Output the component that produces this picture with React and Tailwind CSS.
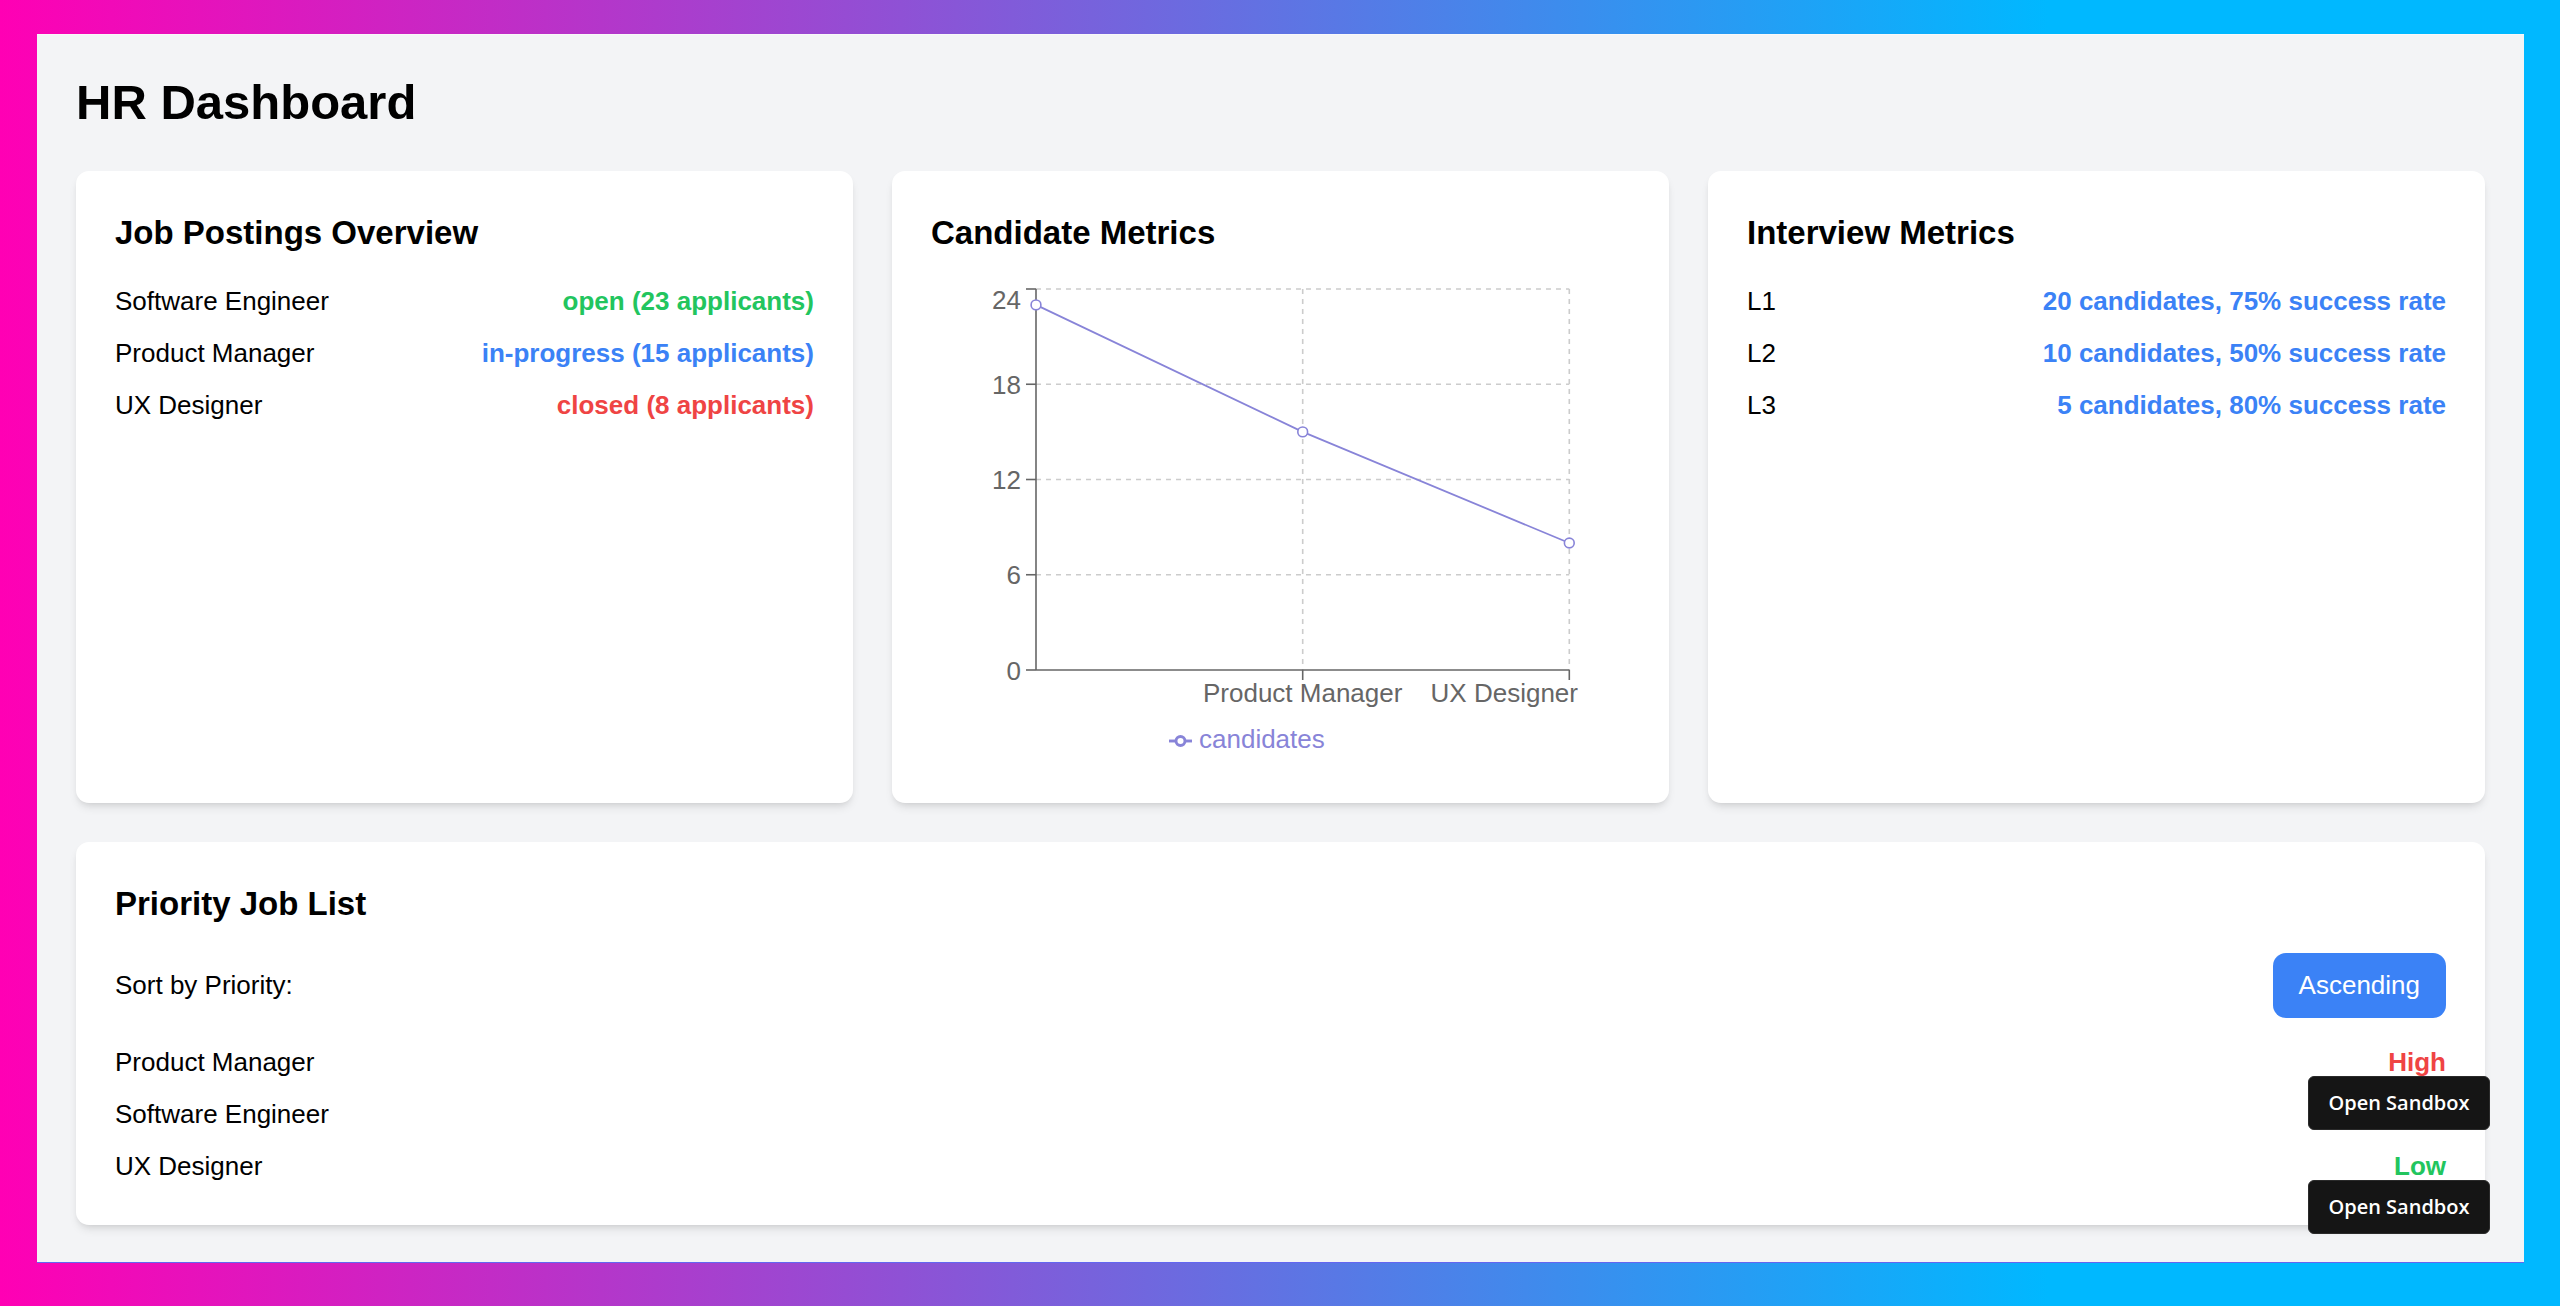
import React, { useState } from 'react';

const postings = [
  { title: 'Software Engineer', status: 'open', applicants: 23 },
  { title: 'Product Manager', status: 'in-progress', applicants: 15 },
  { title: 'UX Designer', status: 'closed', applicants: 8 }
];

const statusColor = {
  open: 'text-[#22c55e]',
  'in-progress': 'text-[#3b82f6]',
  closed: 'text-[#ef4444]'
};

const interviews = [
  { level: 'L1', candidates: 20, rate: 75 },
  { level: 'L2', candidates: 10, rate: 50 },
  { level: 'L3', candidates: 5, rate: 80 }
];

const priorityJobs = [
  { title: 'Software Engineer', priority: 'Medium' },
  { title: 'Product Manager', priority: 'High' },
  { title: 'UX Designer', priority: 'Low' }
];

const rank = { High: 0, Medium: 1, Low: 2 };

const priorityColor = {
  High: 'text-[#ef4444]',
  Medium: 'text-[#eab308]',
  Low: 'text-[#22c55e]'
};

const PLOT = { left: 105, right: 638.3, top: 7, bottom: 388, max: 24 };
const yOf = (v) => PLOT.bottom - (v / PLOT.max) * (PLOT.bottom - PLOT.top);
const xs = [105, 371.7, 638.3];
const series = [23, 15, 8];

function CandidateChart() {
  const ticks = [0, 6, 12, 18, 24];
  const pts = series.map((v, i) => [xs[i], yOf(v)]);
  return (
    <svg width={699} height={482} className="block" fontFamily="'Liberation Sans', Arial, sans-serif">
      {/* grid */}
      {ticks.slice(1).map((t) =>
        <line key={t} x1={PLOT.left} x2={PLOT.right} y1={yOf(t)} y2={yOf(t)} stroke="#ccc" strokeWidth={1.6} strokeDasharray="5 5" />
      )}
      {xs.slice(1).map((x) =>
        <line key={x} x1={x} x2={x} y1={PLOT.top} y2={PLOT.bottom} stroke="#ccc" strokeWidth={1.6} strokeDasharray="5 5" />
      )}

      {/* y axis */}
      <line x1={PLOT.left} x2={PLOT.left} y1={PLOT.top} y2={PLOT.bottom} stroke="#666" strokeWidth={1.6} />
      {ticks.map((t) =>
        <g key={t}>
          <line x1={95} x2={PLOT.left} y1={yOf(t)} y2={yOf(t)} stroke="#666" strokeWidth={1.6} />
          <text x={90} y={t === 24 ? 27 : yOf(t) + 9.5} textAnchor="end" fontSize={26} fill="#666">{t}</text>
        </g>
      )}

      {/* x axis */}
      <line x1={PLOT.left} x2={PLOT.right} y1={PLOT.bottom} y2={PLOT.bottom} stroke="#666" strokeWidth={1.6} />
      {xs.slice(1).map((x) =>
        <line key={x} x1={x} x2={x} y1={PLOT.bottom} y2={PLOT.bottom + 10} stroke="#666" strokeWidth={1.6} />
      )}
      <text x={371.7} y={420} textAnchor="middle" fontSize={26} fill="#666">Product Manager</text>
      <text x={647} y={420} textAnchor="end" fontSize={26} fill="#666">UX Designer</text>

      {/* series */}
      <polyline points={pts.map((p) => p.join(',')).join(' ')} fill="none" stroke="#8884d8" strokeWidth={1.8} />
      {pts.map(([x, y]) =>
        <circle key={x} cx={x} cy={y} r={4.9} fill="#fff" stroke="#8884d8" strokeWidth={1.6} />
      )}

      {/* legend */}
      <g stroke="#8884d8" strokeWidth={2.9} fill="none">
        <line x1={238} x2={245} y1={459} y2={459} />
        <circle cx={249.5} cy={459} r={4.5} />
        <line x1={254} x2={261} y1={459} y2={459} />
      </g>
      <text x={268} y={466} fontSize={26} fill="#8884d8">candidates</text>
    </svg>);

}

function Card({ title, children, className = '' }) {
  return (
    <div className={`bg-white rounded-[13px] p-[39px] shadow-[0_6px_10px_-2px_rgba(0,0,0,0.1),0_3px_6px_-3px_rgba(0,0,0,0.1)] ${className}`}>
      <h2 className="text-[33px] leading-[46px] font-semibold mb-[26px] text-black">{title}</h2>
      {children}
    </div>);

}

export default function App() {
  const [ascending, setAscending] = useState(true);
  const sorted = [...priorityJobs].sort((a, b) =>
  ascending ? rank[a.priority] - rank[b.priority] : rank[b.priority] - rank[a.priority]
  );

  return (
    <div className="relative min-h-screen pt-[34px] pl-[37px] pr-[36px] pb-[43px] bg-[linear-gradient(90deg,#ff00b4_0%,#00b8ff_80%)] font-['Liberation_Sans',Arial,sans-serif] text-black">
      <div className="bg-[#f3f4f6] px-[39px] pt-[39px] pb-[37px] border-b border-b-[#6366f1] shadow-[inset_0_1px_0_rgba(255,255,255,0.4)]">
        <h1 className="text-[49px] leading-[59px] font-bold mb-[39px]">HR Dashboard</h1>

        <div className="grid grid-cols-3 gap-[39px] mb-[39px]">
          <Card title="Job Postings Overview">
            <ul className="space-y-[13px] text-[26px] leading-[39px]">
              {postings.map((p) =>
              <li key={p.title} className="flex justify-between">
                  <span>{p.title}</span>
                  <span className={`font-semibold ${statusColor[p.status]}`}>
                    {p.status} ({p.applicants} applicants)
                  </span>
                </li>
              )}
            </ul>
          </Card>

          <Card title="Candidate Metrics">
            <CandidateChart />
          </Card>

          <Card title="Interview Metrics">
            <ul className="space-y-[13px] text-[26px] leading-[39px]">
              {interviews.map((r) =>
              <li key={r.level} className="flex justify-between">
                  <span>{r.level}</span>
                  <span className="font-semibold text-[#3b82f6]">
                    {r.candidates} candidates, {r.rate}% success rate
                  </span>
                </li>
              )}
            </ul>
          </Card>
        </div>

        <Card title="Priority Job List">
          <div className="flex items-center justify-between mb-[25px] text-[26px] leading-[39px]">
            <span>Sort by Priority:</span>
            <button
              onClick={() => setAscending(!ascending)}
              className="bg-[#3b82f6] text-white px-[26px] py-[13px] rounded-[13px] leading-[39px]">
              {ascending ? 'Ascending' : 'Descending'}
            </button>
          </div>
          <ul className="space-y-[13px] text-[26px] leading-[39px]">
            {sorted.map((j) =>
            <li key={j.title} className="flex justify-between">
                <span>{j.title}</span>
                <span className={`font-semibold ${priorityColor[j.priority]}`}>{j.priority}</span>
              </li>
            )}
          </ul>
        </Card>
      </div>

      <a className="absolute right-[70px] top-[1076px] w-[182px] h-[54px] flex items-center justify-center rounded-[6px] bg-[#151515] border border-[#2a2a2a] text-white text-[20px] font-semibold font-['Open_Sans',sans-serif]">
        Open Sandbox
      </a>
      <a className="absolute right-[70px] top-[1180px] w-[182px] h-[54px] flex items-center justify-center rounded-[6px] bg-[#151515] border border-[#2a2a2a] text-white text-[20px] font-semibold font-['Open_Sans',sans-serif]">
        Open Sandbox
      </a>
    </div>);

}
